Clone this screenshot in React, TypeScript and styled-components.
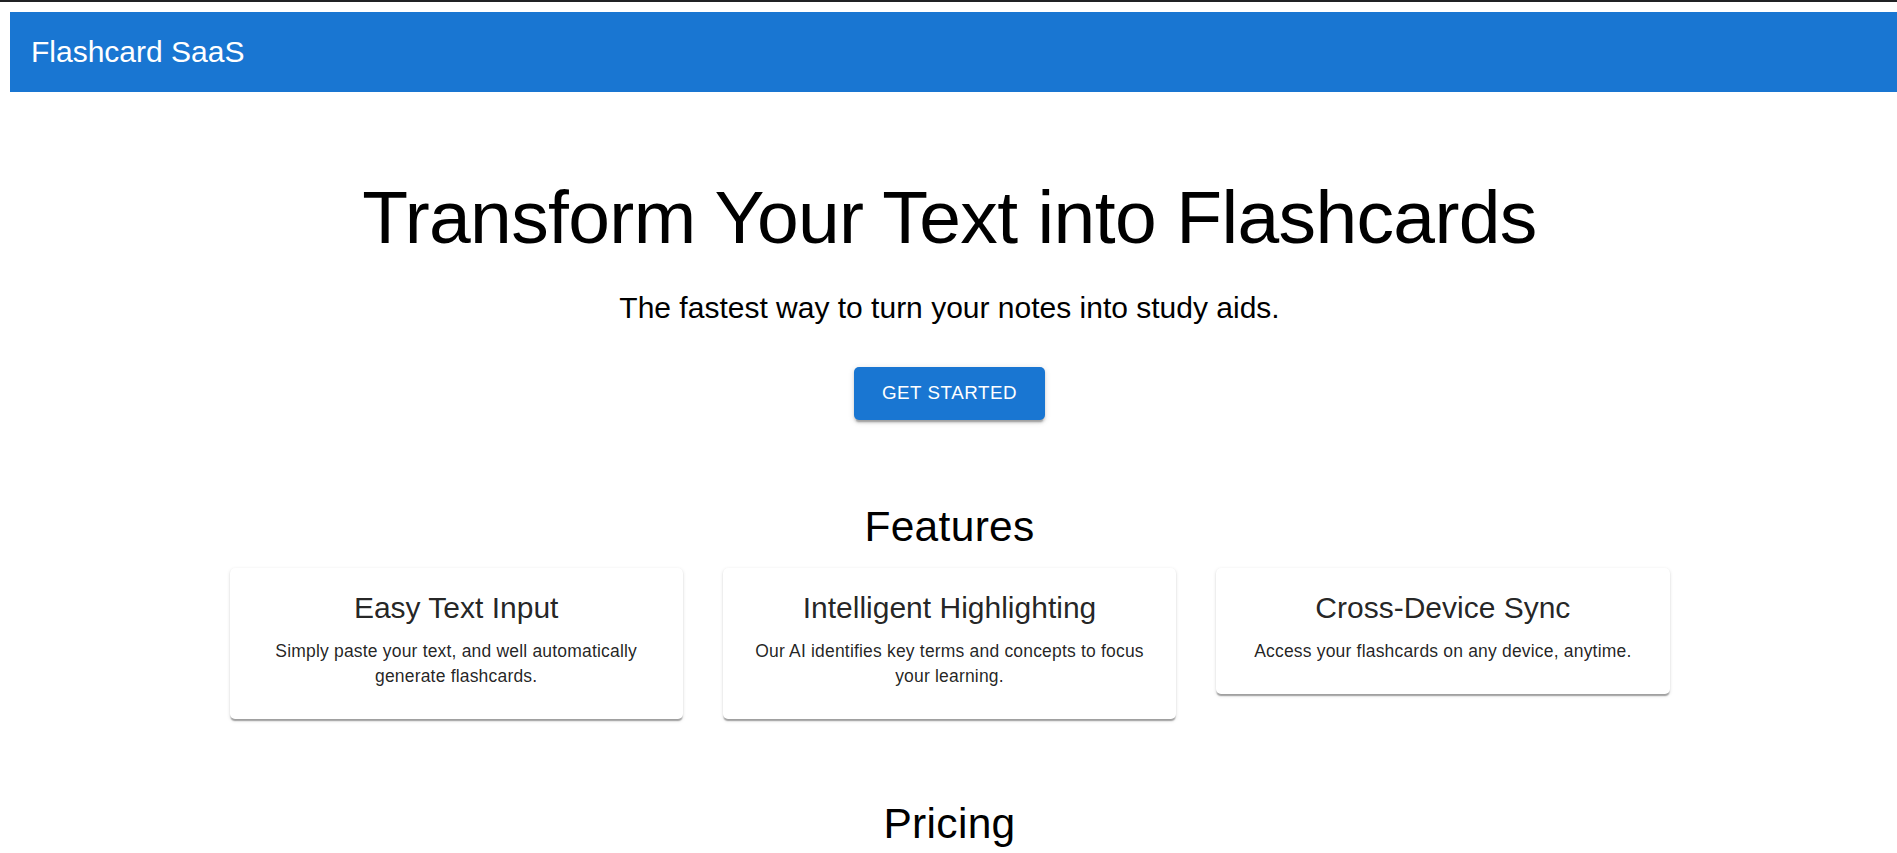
import React from "react";
import styled, { createGlobalStyle } from "styled-components";

const GlobalStyle = createGlobalStyle`
  html, body {
    margin: 0;
    padding: 0;
    background: #ffffff;
    font-family: "Liberation Sans", Arial, sans-serif;
    overflow-x: hidden;
  }
`;

const TopStrip = styled.div`
  height: 2px;
  background: #202124;
`;

const Page = styled.div`
  padding: 10px 8px 0 10px;
`;

const AppBar = styled.header`
  display: flex;
  align-items: center;
  height: 80px;
  margin-right: -8px;
  padding: 0 21px;
  background: #1976d2;
  color: #ffffff;
`;

const Brand = styled.div`
  font-size: 30px;
  line-height: 40px;
  font-weight: 400;
`;

const Container = styled.main`
  max-width: 1500px;
  margin: 0 auto;
  padding: 0 30px;
  box-sizing: border-box;
`;

const Hero = styled.section`
  display: flex;
  flex-direction: column;
  align-items: center;
  text-align: center;
  margin-top: 80px;
`;

const Title = styled.h1`
  margin: 0 0 26.25px;
  font-size: 75px;
  line-height: 1.2;
  font-weight: 400;
  letter-spacing: -0.00833em;
  color: #000000;
`;

const Subtitle = styled.p`
  margin: 0 0 10.5px;
  font-size: 30px;
  line-height: 40px;
  font-weight: 400;
  color: #000000;
`;

const PrimaryButton = styled.button`
  margin-top: 28.5px;
  border: none;
  border-radius: 5px;
  padding: 10px 27.5px;
  background: #1976d2;
  color: #ffffff;
  font-family: "Liberation Sans", Arial, sans-serif;
  font-size: 18.75px;
  line-height: 1.75;
  font-weight: 400;
  letter-spacing: 0.02857em;
  text-transform: uppercase;
  cursor: pointer;
  box-shadow: 0px 3.75px 1.25px -2.5px rgba(0, 0, 0, 0.2),
    0px 2.5px 2.5px 0px rgba(0, 0, 0, 0.14), 0px 1.25px 6.25px 0px rgba(0, 0, 0, 0.12);
`;

const Section = styled.section<{ $top: number }>`
  margin-top: ${(p) => p.$top}px;
  text-align: center;
`;

const SectionTitle = styled.h2`
  margin: 0 0 14.9px;
  font-size: 42.5px;
  line-height: 1.235;
  font-weight: 400;
  letter-spacing: 0.00735em;
  color: #000000;
`;

const CardGrid = styled.div`
  display: grid;
  grid-template-columns: repeat(3, 1fr);
  gap: 40px;
  align-items: start;
`;

const Card = styled.article`
  background: #ffffff;
  border-radius: 5px;
  padding: 20px 20px 30px;
  color: rgba(0, 0, 0, 0.87);
  box-shadow: 0px 2.5px 1.25px -1.25px rgba(0, 0, 0, 0.2),
    0px 1.25px 1.25px 0px rgba(0, 0, 0, 0.14), 0px 1.25px 3.75px 0px rgba(0, 0, 0, 0.12);
`;

const CardTitle = styled.h3`
  margin: 0 0 10.5px;
  font-size: 30px;
  line-height: 40px;
  font-weight: 400;
`;

const CardText = styled.p`
  margin: 0;
  font-size: 17.5px;
  line-height: 1.43;
  letter-spacing: 0.01071em;
`;

const features = [
  {
    title: "Easy Text Input",
    text: "Simply paste your text, and well automatically generate flashcards.",
  },
  {
    title: "Intelligent Highlighting",
    text: "Our AI identifies key terms and concepts to focus your learning.",
  },
  {
    title: "Cross-Device Sync",
    text: "Access your flashcards on any device, anytime.",
  },
];

export default function App() {
  return (
    <>
      <GlobalStyle />
      <TopStrip />
      <Page>
        <AppBar>
          <Brand>Flashcard SaaS</Brand>
        </AppBar>
        <Container>
          <Hero>
            <Title>Transform Your Text into Flashcards</Title>
            <Subtitle>The fastest way to turn your notes into study aids.</Subtitle>
            <PrimaryButton>Get Started</PrimaryButton>
          </Hero>
          <Section $top={81}>
            <SectionTitle>Features</SectionTitle>
            <CardGrid>
              {features.map((f) => (
                <Card key={f.title}>
                  <CardTitle>{f.title}</CardTitle>
                  <CardText>{f.text}</CardText>
                </Card>
              ))}
            </CardGrid>
          </Section>
          <Section $top={79}>
            <SectionTitle>Pricing</SectionTitle>
          </Section>
        </Container>
      </Page>
    </>
  );
}
